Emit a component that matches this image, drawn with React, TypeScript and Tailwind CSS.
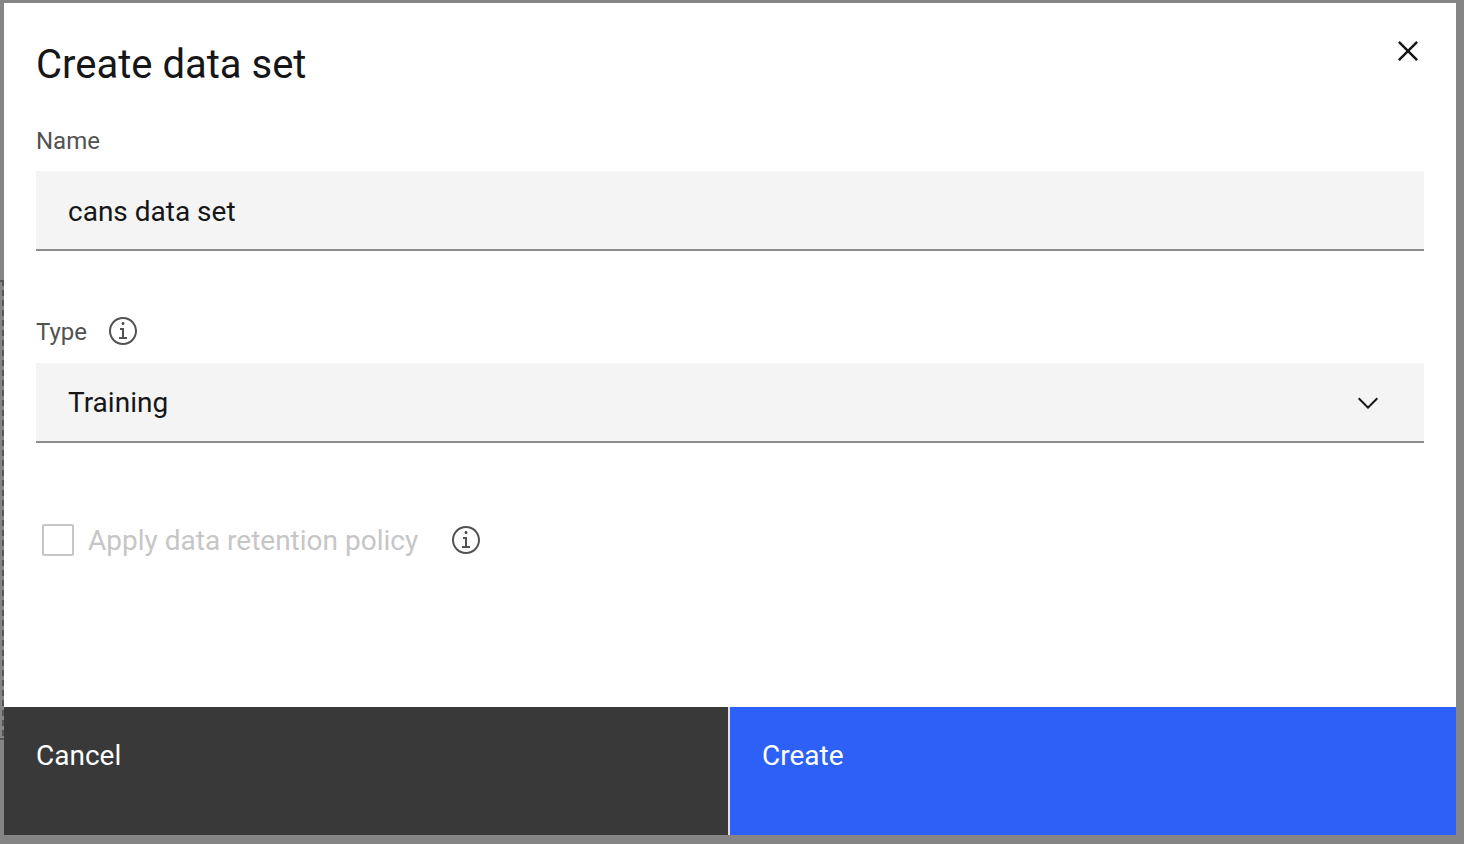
import { useState } from "react";

function InfoIcon() {
  return (
    <svg viewBox="0 0 16 16" className="size-8" fill="currentColor" aria-hidden="true">
      <path d="M8.5 11V6.5h-2v1h1V11H6v1h4v-1zM8 3.5c-.4 0-.75.35-.75.75S7.6 5 8 5s.75-.35.75-.75S8.4 3.5 8 3.5z" />
      <path d="M8 15c-3.9 0-7-3.1-7-7s3.1-7 7-7 7 3.1 7 7-3.1 7-7 7zM8 2C4.7 2 2 4.7 2 8s2.7 6 6 6 6-2.7 6-6-2.7-6-6-6z" />
    </svg>
  );
}

function CloseIcon() {
  return (
    <svg viewBox="0 0 32 32" className="size-10" fill="currentColor" aria-hidden="true">
      <path d="M17.4141 16L24 9.4141 22.5859 8 16 14.5859 9.4143 8 8 9.4141 14.5859 16 8 22.5859 9.4143 24 16 17.4141 22.5859 24 24 22.5859z" />
    </svg>
  );
}

function ChevronIcon() {
  return (
    <svg viewBox="0 0 16 16" className="size-8" fill="currentColor" aria-hidden="true">
      <path d="M8 11L3 6l.7-.7L8 9.6l4.3-4.3.7.7z" />
    </svg>
  );
}

function DropZoneEdge() {
  return (
    <svg className="absolute left-0 top-[280px] h-[460px] w-1" viewBox="0 0 4 460" aria-hidden="true">
      <path d="M0 1h4M0 459h4" stroke="#575757" strokeWidth="2" />
      <path d="M3 0v460" stroke="#575757" strokeWidth="2" strokeDasharray="6 4" />
    </svg>
  );
}

export default function App() {
  const [name, setName] = useState("cans data set");
  const [type, setType] = useState("Training");

  return (
    <div className="relative flex min-h-screen flex-col bg-[#858585] pt-[3px] pr-2 pb-[9px] pl-1 font-['Roboto',sans-serif] text-[28px] text-[#161616]">
      <DropZoneEdge />
      <form
        role="dialog"
        aria-labelledby="dialog-title"
        className="flex flex-1 flex-col bg-white"
        onSubmit={(event) => event.preventDefault()}
      >
        <div className="flex flex-1 flex-col px-8 pt-7">
          <header className="flex items-start justify-between">
            <h1 id="dialog-title" className="pt-1.5 text-[40px] leading-[56px]">
              Create data set
            </h1>
            <button type="button" aria-label="Close" className="-mr-1">
              <CloseIcon />
            </button>
          </header>

          <label htmlFor="name" className="mt-[30px] pt-0.5 text-2xl leading-8 text-[#525252]">
            Name
          </label>
          <input
            id="name"
            type="text"
            value={name}
            onChange={(event) => setName(event.target.value)}
            className="mt-3.5 h-20 w-full border-b-2 border-[#8d8d8d] bg-[#f4f4f4] px-8 pt-0.5 outline-none"
          />

          <div className="mt-16 flex items-center gap-5 text-[#525252]">
            <label htmlFor="type" className="-mb-0.5 text-2xl leading-8">
              Type
            </label>
            <button type="button" aria-label="About types">
              <InfoIcon />
            </button>
          </div>
          <div className="mt-4 grid items-center">
            <select
              id="type"
              value={type}
              onChange={(event) => setType(event.target.value)}
              className="col-start-1 row-start-1 h-20 w-full appearance-none rounded-none border-b-2 border-[#8d8d8d] bg-[#f4f4f4] px-8 pt-0.5 outline-none"
            >
              <option>Training</option>
            </select>
            <span className="pointer-events-none col-start-1 row-start-1 mr-10 justify-self-end">
              <ChevronIcon />
            </span>
          </div>

          <div className="mt-20 mb-8 flex items-center pl-1.5">
            <input
              id="retention"
              type="checkbox"
              disabled
              className="size-8 appearance-none rounded-xs border-2 border-[#c6c6c6]"
            />
            <label htmlFor="retention" className="ml-3.5 pt-0.5 leading-8 text-[#c6c6c6]">
              Apply data retention policy
            </label>
            <button type="button" aria-label="About data retention" className="ml-8 text-[#525252]">
              <InfoIcon />
            </button>
          </div>
        </div>

        <footer className="grid h-32 grid-cols-2">
          <button
            type="button"
            className="flex items-start border-r-2 border-[#e0e0e0] bg-[#393939] px-8 pt-[33px] text-left leading-8 text-white"
          >
            Cancel
          </button>
          <button
            type="submit"
            className="flex items-start bg-[#2d60f6] px-8 pt-[33px] text-left leading-8 text-white"
          >
            Create
          </button>
        </footer>
      </form>
    </div>
  );
}
